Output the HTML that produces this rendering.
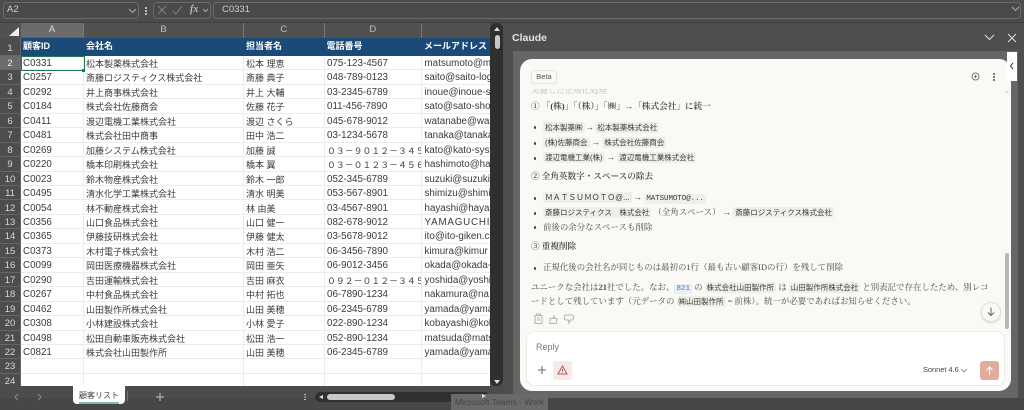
<!DOCTYPE html>
<html lang="ja"><head><meta charset="utf-8"><title>顧客リスト</title>
<style>
*{box-sizing:border-box}
html,body{margin:0;padding:0;width:1024px;height:410px;overflow:hidden;background:#4c4c4c}
body{position:relative;font-family:"Liberation Sans","Noto Sans CJK JP",sans-serif;color:#333}
#w{position:absolute;left:0;top:0;width:1024px;height:410px;background:#4c4c4c;filter:blur(.3px);overflow:hidden}
.a{position:absolute}
.box{position:absolute;border:1px solid #6a6a6a;border-radius:4px;background:#4a4a4a}
.r{position:absolute;left:0;width:490px;height:14.45px;display:flex;line-height:16px;white-space:nowrap;box-shadow:inset 0 -1px #ececec}
.r>b{font-weight:400;width:21px;flex:none;background:#4d4d4d;color:#d8d8d8;font-size:9.5px;text-align:center;border-right:1px solid #666;box-shadow:inset 0 -1px #666;height:14.45px;overflow:hidden}
.r>i{font-style:normal;overflow:hidden;flex:none;border-right:1px solid #ececec;height:14.45px;color:#3a3a3a}
.r>i:nth-child(2){width:63px;padding-left:2px;font-size:9.8px}
.r>i:nth-child(3){width:160px;padding-left:2px;font-size:9px}
.r>i:nth-child(4){width:80.5px;padding-left:2px;font-size:9px}
.r>i:nth-child(5){width:97.5px;padding-left:2.5px;font-size:9.8px}
.r>i:nth-child(6){width:68px;padding-left:2.5px;font-size:9.8px;border-right:0}
.r>i.fw{font-size:8.9px}
.ch{position:absolute;top:23px;height:14.5px;background:#515151;color:#bdbdbd;font-size:9.5px;text-align:center;line-height:14px;border-right:1px solid #777}
.hd{position:absolute;top:37.5px;height:18.5px;background:#1a4a78;color:#fff;font-size:9px;font-weight:700;line-height:17px;padding-left:2px;white-space:nowrap;overflow:hidden}
.m{position:absolute;font-family:"Liberation Serif","Noto Serif CJK SC",serif;font-size:8.45px;line-height:12px;color:#4a4a46;white-space:nowrap}
.c{font-family:"Liberation Sans","Noto Sans CJK JP",sans-serif;font-size:7.5px;background:#f0eee8;padding:1px 2px;border-radius:2px;color:#3a3a36}
.g{font-family:"Liberation Sans",sans-serif;font-weight:700;font-size:8.5px;color:#444}
.dot{position:absolute;left:533.500px;width:2.500px;height:2.500px;border-radius:50%;background:#444}
.h{font-size:8.6px;color:#3c3c38;font-weight:600}
</style></head><body><div id="w">

<!-- formula bar -->
<div class="a" style="left:0;top:22px;width:1024px;height:1px;background:#3f3f3f"></div>
<div class="box" style="left:3px;top:2px;width:136px;height:17px"></div>
<div class="a" style="left:7px;top:3px;font-size:9.5px;line-height:14px;color:#ccc">A2</div>
<svg class="a" style="left:128px;top:8px" width="9" height="6"><path d="M1 1l3.500 3.500L8 1" fill="none" stroke="#aaa"/></svg>
<div class="a" style="left:145px;top:7px;width:2px;height:2px;background:#bbb;box-shadow:0 3px #bbb,0 6px #bbb"></div>
<div class="box" style="left:153px;top:2px;width:58px;height:17px"></div>
<svg class="a" style="left:156px;top:4px" width="56" height="13" fill="none" stroke="#808080"><path d="M2 2l8 8M10 2l-8 8M17 7l3 3 6-8"/><path d="M47 5l2.500 2.500L52 5" stroke="#aaa"/></svg>
<div class="a" style="left:190px;top:2px;font:italic 700 10px/15px 'Liberation Serif',serif;color:#bbb">fx</div>
<div class="box" style="left:213px;top:2px;width:808px;height:17px"></div>
<div class="a" style="left:222px;top:3px;font-size:9.5px;line-height:14px;color:#ccc">C0331</div>
<svg class="a" style="left:1011px;top:6px" width="9" height="6"><path d="M1 1l3.500 3.500L8 1" fill="none" stroke="#aaa"/></svg>

<!-- column headers -->
<div class="a" style="left:0;top:23px;width:21px;height:14.500px;background:#515151"></div>
<div class="a" style="left:9px;top:27px;width:0;height:0;border-left:10px solid transparent;border-bottom:9px solid #eee"></div>
<div class="ch" style="left:21px;width:63px;background:#6b6b6b;color:#ddd;border-bottom:1px solid #2f7d52">A</div>
<div class="ch" style="left:84px;width:160px">B</div>
<div class="ch" style="left:244px;width:80.500px">C</div>
<div class="ch" style="left:324.500px;width:97.500px">D</div>
<div class="ch" style="left:422px;width:68px;border-right:0"></div>

<!-- header row -->
<div class="a" style="left:0;top:37.500px;width:21px;height:18.500px;background:#4d4d4d;color:#d8d8d8;font-size:9.500px;text-align:center;line-height:22px;border-right:1px solid #666;border-bottom:1px solid #666">1</div>
<div class="hd" style="left:21px;width:63px">顧客ID</div>
<div class="hd" style="left:84px;width:160px">会社名</div>
<div class="hd" style="left:244px;width:80.500px">担当者名</div>
<div class="hd" style="left:324.500px;width:97.500px">電話番号</div>
<div class="hd" style="left:422px;width:68px">メールアドレス</div>

<!-- backing -->
<div class="a" style="left:21px;top:56px;width:469px;height:330px;background:#fff"></div>
<div class="a" style="left:0;top:56px;width:21px;height:330px;background:#4d4d4d"></div>

<!-- rows -->
<div class="r" style="top:56px"><b style="background:#6b6b6b;color:#eee">2</b><i>C0331</i><i>松本製薬株式会社</i><i>松本 理恵</i><i>075-123-4567</i><i>matsumoto@m</i></div>
<div class="r" style="top:70.450px"><b>3</b><i>C0257</i><i>斎藤ロジスティクス株式会社</i><i>斎藤 典子</i><i>048-789-0123</i><i>saito@saito-log</i></div>
<div class="r" style="top:84.900px"><b>4</b><i>C0292</i><i>井上商事株式会社</i><i>井上 大輔</i><i>03-2345-6789</i><i>inoue@inoue-s</i></div>
<div class="r" style="top:99.350px"><b>5</b><i>C0184</i><i>株式会社佐藤商会</i><i>佐藤 花子</i><i>011-456-7890</i><i>sato@sato-sho</i></div>
<div class="r" style="top:113.800px"><b>6</b><i>C0411</i><i>渡辺電機工業株式会社</i><i>渡辺 さくら</i><i>045-678-9012</i><i>watanabe@wa</i></div>
<div class="r" style="top:128.250px"><b>7</b><i>C0481</i><i>株式会社田中商事</i><i>田中 浩二</i><i>03-1234-5678</i><i>tanaka@tanaka</i></div>
<div class="r" style="top:142.700px"><b>8</b><i>C0269</i><i>加藤システム株式会社</i><i>加藤 誠</i><i class="fw">０３－９０１２－３４５６</i><i>kato@kato-syst</i></div>
<div class="r" style="top:157.150px"><b>9</b><i>C0220</i><i>橋本印刷株式会社</i><i>橋本 翼</i><i class="fw">０３－０１２３－４５６７</i><i>hashimoto@ha</i></div>
<div class="r" style="top:171.600px"><b>10</b><i>C0023</i><i>鈴木物産株式会社</i><i>鈴木 一郎</i><i>052-345-6789</i><i>suzuki@suzuki</i></div>
<div class="r" style="top:186.050px"><b>11</b><i>C0495</i><i>清水化学工業株式会社</i><i>清水 明美</i><i>053-567-8901</i><i>shimizu@shimi</i></div>
<div class="r" style="top:200.500px"><b>12</b><i>C0054</i><i>林不動産株式会社</i><i>林 由美</i><i>03-4567-8901</i><i>hayashi@haya</i></div>
<div class="r" style="top:214.950px"><b>13</b><i>C0356</i><i>山口食品株式会社</i><i>山口 健一</i><i>082-678-9012</i><i style="letter-spacing:.8px">YAMAGUCHI</i></div>
<div class="r" style="top:229.400px"><b>14</b><i>C0365</i><i>伊藤技研株式会社</i><i>伊藤 健太</i><i>03-5678-9012</i><i>ito@ito-giken.c</i></div>
<div class="r" style="top:243.850px"><b>15</b><i>C0373</i><i>木村電子株式会社</i><i>木村 浩二</i><i>06-3456-7890</i><i>kimura@kimur</i></div>
<div class="r" style="top:258.300px"><b>16</b><i>C0099</i><i>岡田医療機器株式会社</i><i>岡田 亜矢</i><i>06-9012-3456</i><i>okada@okada-</i></div>
<div class="r" style="top:272.750px"><b>17</b><i>C0290</i><i>吉田運輸株式会社</i><i>吉田 麻衣</i><i class="fw">０９２－０１２－３４５６</i><i>yoshida@yoshi</i></div>
<div class="r" style="top:287.200px"><b>18</b><i>C0267</i><i>中村食品株式会社</i><i>中村 拓也</i><i>06-7890-1234</i><i>nakamura@na</i></div>
<div class="r" style="top:301.650px"><b>19</b><i>C0462</i><i>山田製作所株式会社</i><i>山田 美穂</i><i>06-2345-6789</i><i>yamada@yama</i></div>
<div class="r" style="top:316.100px"><b>20</b><i>C0308</i><i>小林建設株式会社</i><i>小林 愛子</i><i>022-890-1234</i><i>kobayashi@kol</i></div>
<div class="r" style="top:330.550px"><b>21</b><i>C0498</i><i>松田自動車販売株式会社</i><i>松田 浩一</i><i>052-890-1234</i><i>matsuda@mats</i></div>
<div class="r" style="top:345px"><b>22</b><i>C0821</i><i>株式会社山田製作所</i><i>山田 美穂</i><i>06-2345-6789</i><i>yamada@yama</i></div>
<div class="r" style="top:359.450px"><b>23</b><i></i><i></i><i></i><i></i><i></i></div>
<div class="r" style="top:373.900px;height:12.100px;box-shadow:none"><b style="height:12.100px;box-shadow:none">24</b><i style="height:12.100px"></i><i style="height:12.100px"></i><i style="height:12.100px"></i><i style="height:12.100px"></i><i style="height:12.100px"></i></div>

<!-- selection -->
<div class="a" style="left:21px;top:56px;width:63.500px;height:15px;border:1.500px solid #1f7a4d"></div>
<div class="a" style="left:82px;top:69px;width:3px;height:3px;background:#1f7a4d"></div>

<!-- vertical scrollbar -->
<div class="a" style="left:490px;top:23px;width:13px;height:363px;background:#2f2f2f;border-radius:6px"></div>
<div class="a" style="left:494px;top:27px;width:0;height:0;border-left:3px solid transparent;border-right:3px solid transparent;border-bottom:4px solid #ddd"></div>
<div class="a" style="left:494.500px;top:35px;width:5px;height:14px;background:#c8c8c8;border-radius:3px"></div>
<div class="a" style="left:494px;top:380px;width:0;height:0;border-left:3px solid transparent;border-right:3px solid transparent;border-top:4px solid #ddd"></div>

<!-- sheet tabs -->
<div class="a" style="left:0;top:386px;width:503px;height:12px;background:#4c4c4c"></div>
<div class="a" style="left:0;top:398px;width:1024px;height:12px;background:#474747"></div>
<svg class="a" style="left:14px;top:392px" width="30" height="10" fill="none" stroke="#8a8a8a"><path d="M4 2L1 5l3 3"/><path d="M24 2l3 3-3 3"/></svg>
<div class="a" style="left:73px;top:386px;width:52px;height:18px;background:#fff;border-radius:0 0 4px 4px;font-size:8px;line-height:19.500px;text-align:center;color:#444;overflow:hidden">顧客リスト</div>
<div class="a" style="left:79px;top:402px;width:40px;height:1.500px;background:#7dbb9b"></div>
<div class="a" style="left:127px;top:391px;width:1px;height:10px;background:#777"></div>
<svg class="a" style="left:155px;top:392px" width="10" height="10" stroke="#ccc"><path d="M5 1v8M1 5h8"/></svg>
<div class="a" style="left:304px;top:393.500px;width:1.500px;height:1.500px;background:#bbb;box-shadow:0 2.500px #bbb,0 5px #bbb"></div>
<div class="a" style="left:315px;top:392px;width:175px;height:10px;background:#303030;border-radius:5px"></div>
<div class="a" style="left:319px;top:394.500px;width:0;height:0;border-top:2.500px solid transparent;border-bottom:2.500px solid transparent;border-right:4px solid #ddd"></div>
<div class="a" style="left:326.500px;top:394px;width:68.500px;height:6px;background:#c8c8c8;border-radius:3px"></div>

<!-- claude panel -->
<div class="a" style="left:503px;top:23px;width:521px;height:375px;background:#4e4e4e"></div>
<div class="a" style="left:512px;top:31px;font-size:10.500px;font-weight:700;line-height:14px;color:#e4e4e4">Claude</div>
<svg class="a" style="left:984px;top:32px" width="34" height="12" fill="none" stroke="#e0e0e0"><path d="M1 3l4.500 4.500L10 3"/><path d="M24 2l8 8M32 2l-8 8"/></svg>
<div class="a" style="left:513px;top:51px;width:505px;height:347px;background:#666"></div>
<div class="a" style="left:520px;top:59px;width:491px;height:332px;background:#faf9f5;border-radius:12px"></div>
<div class="a" style="left:1007px;top:51.500px;width:10px;height:29.500px;background:#fff"></div>
<svg class="a" style="left:1009px;top:62px" width="6" height="8" fill="none" stroke="#444"><path d="M4 1L1.500 4 4 7"/></svg>

<div class="a" style="left:531px;top:69.500px;width:26px;height:14px;border:1px solid #e6e3db;border-radius:3px;font-size:7.500px;line-height:12px;text-align:center;color:#555">Beta</div>
<svg class="a" style="left:970px;top:71px" width="12" height="12" fill="none" stroke="#777"><circle cx="5.500" cy="5.500" r="3.500"/><path d="M4 5.500h3M5.500 4v3"/></svg>
<div class="a" style="left:993px;top:73px;width:2px;height:2px;background:#777;box-shadow:0 3px #777,0 6px #777"></div>

<div class="a" style="left:531px;top:88.500px;width:100px;height:5px;overflow:hidden"><div class="m" style="left:0;top:-5px;color:#bbb">実施した正規化処理</div></div>
<div class="m h" style="left:531px;top:100px">① 「(株)」「（株）」「㈱」<span class="g">→</span>「株式会社」に統一</div>

<div class="dot" style="top:126px"></div>
<div class="m" style="left:543px;top:120.500px"><span class="c">松本製薬㈱</span> <span class="g" style="margin:0 -1px">→</span> <span class="c">松本製薬株式会社</span></div>
<div class="dot" style="top:142px"></div>
<div class="m" style="left:543px;top:136px"><span class="c">(株)佐藤商会</span> <span class="g">→</span> <span class="c">株式会社佐藤商会</span></div>
<div class="dot" style="top:157px"></div>
<div class="m" style="left:543px;top:151px"><span class="c">渡辺電機工業(株)</span> <span class="g">→</span> <span class="c">渡辺電機工業株式会社</span></div>

<div class="m h" style="left:531px;top:170px">② 全角英数字・スペースの除去</div>

<div class="dot" style="top:197px"></div>
<div class="m" style="left:543px;top:190.500px"><span class="c" style="font-size:7.800px">ＭＡＴＳＵＭＯＴＯ@...</span> <span class="g">→</span> <span class="c" style="font-family:'Liberation Mono',monospace;font-size:7.400px">MATSUMOTO@...</span></div>
<div class="dot" style="top:212px"></div>
<div class="m" style="left:543px;top:205.500px"><span class="c">斎藤ロジスティクス　株式会社</span> （全角スペース） <span class="g">→</span> <span class="c">斎藤ロジスティクス株式会社</span></div>
<div class="dot" style="top:226px"></div>
<div class="m" style="left:543px;top:220.500px">前後の余分なスペースも削除</div>

<div class="m h" style="left:531px;top:240px">③ 重複削除</div>

<div class="dot" style="top:267px"></div>
<div class="m" style="left:543px;top:261px">正規化後の会社名が同じものは最初の1行（最も古い顧客IDの行）を残して削除</div>

<div class="m" style="left:531px;top:280.500px">ユニークな会社は<b>21</b>社でした。なお、<span class="c" style="background:#e6eefa;color:#5577aa;font-family:'Liberation Mono',monospace">821</span> の <span class="c">株式会社山田製作所</span> は <span class="c">山田製作所株式会社</span> と別表記で存在したため、別レコ</div>
<div class="m" style="left:531px;top:295px">ードとして残しています（元データの <span class="c">㈱山田製作所</span> = 前株）。統一が必要であればお知らせください。</div>

<svg class="a" style="left:534px;top:313px" width="54" height="12" fill="none" stroke="#b5b3ad"><path d="M1 2.500h7v8H1zM2.500 1h4v1.500h-4zM3 5h3M3 7h3"/><path d="M16 10.500h6l1-5h-3l.5-3-2 3h-2.500zM32 2h6a1.500 1.500 0 0 1 1.500 1.500v2A1.500 1.500 0 0 1 38 7h-1.500l-1.500 3-.5-3H32a1.500 1.500 0 0 1-1.500-1.500v-2A1.500 1.500 0 0 1 32 2z"/></svg>

<div class="a" style="left:981px;top:302px;width:20px;height:20px;border-radius:50%;background:#faf9f5;border:1px solid #e2e0d9;box-shadow:0 1px 2px rgba(0,0,0,.15)"></div>
<svg class="a" style="left:986px;top:306px" width="10" height="12" fill="none" stroke="#666"><path d="M5 1.500v8M2 6.500l3 3 3-3"/></svg>

<!-- content scrollbar -->
<div class="a" style="left:1005px;top:90px;width:0;height:0;border-left:2.500px solid transparent;border-right:2.500px solid transparent;border-bottom:3px solid #ddd"></div>
<div class="a" style="left:1005px;top:253px;width:4px;height:76px;background:#b8b8b4;border-radius:2px"></div>

<!-- reply box -->
<div class="a" style="left:526px;top:331px;width:479px;height:55px;background:#fff;border:1px solid #eeece6;border-radius:9px"></div>
<div class="a" style="left:536px;top:341px;font-size:9px;line-height:13px;color:#777">Reply</div>
<svg class="a" style="left:536.500px;top:364.500px" width="10" height="10" stroke="#666"><path d="M5 1v8M1 5h8"/></svg>
<div class="a" style="left:553px;top:360.500px;width:19px;height:19px;border-radius:3px;background:#f7e9e7"></div>
<svg class="a" style="left:557px;top:365px" width="11" height="10" fill="none" stroke="#b2565a"><path d="M5.500 1L10 9H1zM5.500 4v2.500M5.500 7.500v.5"/></svg>
<div class="a" style="left:923px;top:364px;font-size:7.400px;line-height:12px;color:#444">Sonnet 4.6</div>
<svg class="a" style="left:960px;top:368px" width="8" height="5" fill="none" stroke="#999"><path d="M1 1l3 3 3-3"/></svg>
<div class="a" style="left:980px;top:360.500px;width:19px;height:19px;border-radius:3px;background:#dfad9b"></div>
<svg class="a" style="left:984px;top:364.500px" width="11" height="11" fill="none" stroke="#fff"><path d="M5.500 10V2M2.500 5l3-3 3 3"/></svg>

<!-- taskbar tooltip -->
<div class="a" style="left:451px;top:394px;width:97px;height:16px;background:#6a6a6a;font-size:8.500px;line-height:17px;text-align:center;color:#444;white-space:nowrap;overflow:hidden">Microsoft Teams - Work</div>
<div class="a" style="left:482px;top:394px;width:0;height:0;border-top:2.500px solid transparent;border-bottom:2.500px solid transparent;border-left:4px solid #ddd"></div>
</div></body></html>
